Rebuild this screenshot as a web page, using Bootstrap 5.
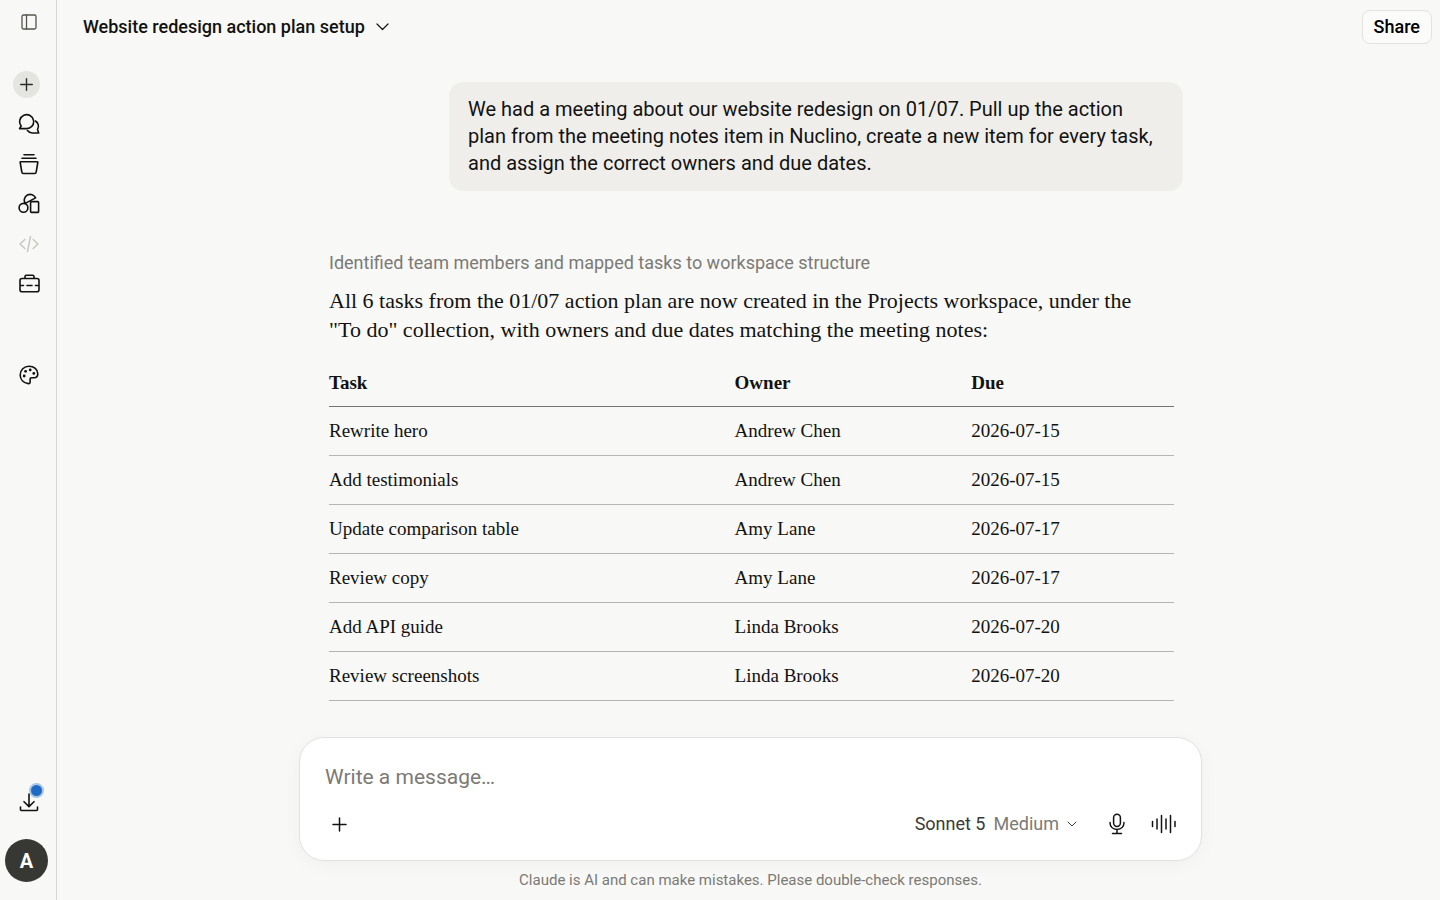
<!DOCTYPE html>
<html lang="en">
<head>
<meta charset="utf-8">
<meta name="viewport" content="width=device-width, initial-scale=1">
<title>Website redesign action plan setup</title>
<link href="https://cdn.jsdelivr.net/npm/bootstrap@5.3.0/dist/css/bootstrap.min.css" rel="stylesheet">
<style>
  :root { --ink: #121210; --soft: #7b7a75; --paper: #f8f8f6; --line: #d6d6d3; }
  body { background: var(--paper); color: var(--ink); font-family: Roboto, "Liberation Sans", sans-serif; font-size: 18px; line-height: 24px; }
  svg { display: block; fill: none; stroke: currentColor; stroke-linecap: round; stroke-linejoin: round; }
  .plain { border: 0; background: none; padding: 0; color: inherit; }

  .rail { width: 57px; border-right: 1px solid var(--line); padding: 8px 0 18px; }
  .rail-item { width: 40px; height: 40px; margin-left: 9px; display: flex; align-items: center; justify-content: center; position: relative; color: var(--ink); }
  .rail-toggle { height: 28px; margin-bottom: 28px; color: #55544f; }
  .rail-new { margin-left: 6px; color: #2b2b28; }
  .rail-new span { width: 27px; height: 27px; background: #e4e4e1; }
  .rail-off { color: #c6c5bf; }
  .rail-gap { margin-top: 51px; }
  .dot { position: absolute; right: 5px; top: 1px; width: 15px; height: 15px; border: 2px solid #a9c5e5; background: #1f6ac2; border-radius: 50%; }
  .avatar { width: 43px; height: 43px; margin: 17px 0 0 5px; background: #373734; color: #fff; font-size: 20px; font-weight: 700; }

  .topbar { padding: 10px 8px 0 26px; }
  .title { font-weight: 500; gap: 11px; }
  .share { height: 34px; padding: 0 11px; border: 1px solid #e2e2df; border-radius: 8px; background: #fbfbf9; font-weight: 500; }

  .lane { width: 100%; max-width: 903px; margin: 0 auto; }
  .shift { padding-left: 4px; }
  .ask { max-width: 734px; margin: 38px 19px 60px auto; padding: 14px 19px; border-radius: 14px; background: #efeeeb; font-size: 20px; line-height: 27px; }
  .answer { padding: 0 28px 0 30px; font-family: "Liberation Serif", serif; }
  .status { color: var(--soft); font-family: Roboto, "Liberation Sans", sans-serif; margin-bottom: 11px; }
  .reply { max-width: 820px; font-size: 22px; line-height: 29px; margin-bottom: 15px; }
  .tasks { --bs-table-bg: transparent; --bs-table-color: var(--ink); table-layout: fixed; font-size: 19px; line-height: 24px; margin: 0; }
  .tasks > :not(caption) > * > * { padding: 12px 0; border-bottom: 1px solid #b5b5b2; }
  .tasks > thead > tr > th { padding-bottom: 11px; border-bottom-color: #747471; }
  .c-task { width: 48%; } .c-owner { width: 28%; } .c-due { width: 24%; }

  .composer { background: #fff; border: 1px solid #e1e1de; border-radius: 25px; padding: 25px 24px 20px 25px; box-shadow: 0 4px 20px rgba(0,0,0,.035); }
  .composer input { display: block; width: 100%; height: 28px; border: 0; padding: 0; outline: 0; font-size: 21px; background: none; margin-bottom: 17px; }
  .composer input::placeholder { color: var(--soft); opacity: 1; }
  .tools { height: 32px; }
  .add { margin-left: 7px; }
  .model { color: #3a3a37; gap: 8px; margin-right: 32px; }
  .model .effort { color: var(--soft); }
  .mic { margin-right: 26px; }
  .note { font-size: 15px; line-height: 20px; color: var(--soft); padding: 9px 0 10px; }
</style>
</head>
<body>
<div class="d-flex vh-100 overflow-hidden">
  <nav class="rail d-flex flex-column flex-shrink-0" aria-label="Main">
    <button class="plain rail-item rail-toggle" type="button" aria-label="Toggle sidebar">
      <svg width="16" height="16" viewBox="0 0 16 16" stroke-width="1.3"><rect x="1" y="1" width="14" height="14" rx="1.5"/><path d="M5.500 1v14"/></svg>
    </button>
    <button class="plain rail-item rail-new" type="button" aria-label="New chat">
      <span class="rounded-circle d-flex align-items-center justify-content-center"><svg width="13" height="13" viewBox="0 0 13 13" stroke-width="1.4"><path d="M6.500.7v11.600M.7 6.500h11.600"/></svg></span>
    </button>
    <a class="rail-item" href="#" aria-label="Chats">
      <svg width="22" height="22" viewBox="0 0 22 22" stroke-width="1.600"><path d="M1.500 15.600 3.200 13a7 7 0 1 1 4.800 2.600Z"/><path d="M17.500 8a6.300 6.300 0 0 1 2 8.600l1.200 3.400h-6.300a6.200 6.200 0 0 1-5-2.400"/></svg>
    </a>
    <a class="rail-item" href="#" aria-label="Projects">
      <svg width="20" height="22" viewBox="0 0 20 22" stroke-width="1.600"><path d="M5 1.700h10M3 5.200h14M1.900 8.700h16.200q.8 0 .7.800L17.200 19q-.2 1.500-1.600 1.500H4.400Q3 20.500 2.800 19L1.200 9.500q-.1-.8.7-.8Z"/></svg>
    </a>
    <a class="rail-item" href="#" aria-label="Artifacts">
      <svg width="22" height="22" viewBox="0 0 22 22" stroke-width="1.600"><circle cx="5.500" cy="14.800" r="4.400"/><rect x="12.600" y="8.600" width="8" height="10.800" rx=".8"/><path d="M7.200 10.400A5.900 5.900 0 1 1 17.600 4.900Z"/></svg>
    </a>
    <a class="rail-item rail-off" href="#" aria-label="Code">
      <svg width="20" height="18" viewBox="0 0 20 18" stroke-width="1.400"><path d="M5.800 4.500 1 9l4.800 4.500M14.200 4.500 19 9l-4.800 4.500M11.500 1.500l-3 15"/></svg>
    </a>
    <a class="rail-item" href="#" aria-label="Customize">
      <svg width="21" height="21" viewBox="0 0 21 21" stroke-width="1.600"><path d="M3 4.500h15q2 0 2 2v9.200q0 2-2 2H3q-2 0-2-2V6.500q0-2 2-2ZM6 4.300V2.600Q6 1.200 7.400 1.200h6.200Q15 1.200 15 2.600v1.700M1.200 11.500h3.300M8 11.500h5M16.500 11.500h3.300"/></svg>
    </a>
    <a class="rail-item rail-gap" href="#" aria-label="Design">
      <svg width="20" height="20" viewBox="0 0 20 20" stroke-width="1.600"><path d="M10 1.200c5 0 8.800 3.300 8.800 7.600 0 2.700-1.500 3.900-3.600 3.900h-2.300c-1.200 0-1.800.6-1.800 1.600v2.900c0 1.100-.7 1.600-1.800 1.400-5-.6-8.100-4.200-8.100-8.700 0-4.900 3.800-8.700 8.800-8.700Z"/><g fill="currentColor" stroke="none"><circle cx="6.600" cy="6.300" r="1.400"/><circle cx="11.200" cy="4.900" r="1.400"/><circle cx="14.800" cy="8.400" r="1.400"/><circle cx="5.200" cy="11" r="1.400"/></g></svg>
    </a>
    <button class="plain rail-item mt-auto" type="button" aria-label="Downloads">
      <svg width="20" height="20" viewBox="0 0 20 20" stroke-width="1.600"><path d="M10 2v12.500M5 9.700l5 4.900 5-4.900M1.500 15v2.500q0 1 1 1h15q1 0 1-1V15"/></svg>
      <span class="dot"></span>
    </button>
    <button class="plain avatar rounded-circle" type="button" aria-label="Account">A</button>
  </nav>

  <main class="d-flex flex-column flex-grow-1 overflow-hidden">
    <header class="topbar d-flex align-items-center justify-content-between">
      <button class="plain title d-flex align-items-center" type="button">Website redesign action plan setup
        <svg width="13" height="8" viewBox="0 0 13 8" stroke-width="1.200"><path d="m1 1 5.500 5.500L12 1"/></svg>
      </button>
      <button class="share" type="button">Share</button>
    </header>

    <div class="shift flex-grow-1 overflow-hidden">
      <div class="lane">
        <div class="d-flex"><div class="ask">We had a meeting about our website redesign on 01/07. Pull up the action plan from the meeting notes item in Nuclino, create a new item for every task, and assign the correct owners and due dates.</div></div>
        <article class="answer">
          <div class="status">Identified team members and mapped tasks to workspace structure</div>
          <p class="reply">All 6 tasks from the 01/07 action plan are now created in the Projects workspace, under the "To do" collection, with owners and due dates matching the meeting notes:</p>
          <table class="table tasks">
            <thead><tr><th class="c-task" scope="col">Task</th><th class="c-owner" scope="col">Owner</th><th class="c-due" scope="col">Due</th></tr></thead>
            <tbody>
              <tr><td>Rewrite hero</td><td>Andrew Chen</td><td>2026-07-15</td></tr>
              <tr><td>Add testimonials</td><td>Andrew Chen</td><td>2026-07-15</td></tr>
              <tr><td>Update comparison table</td><td>Amy Lane</td><td>2026-07-17</td></tr>
              <tr><td>Review copy</td><td>Amy Lane</td><td>2026-07-17</td></tr>
              <tr><td>Add API guide</td><td>Linda Brooks</td><td>2026-07-20</td></tr>
              <tr><td>Review screenshots</td><td>Linda Brooks</td><td>2026-07-20</td></tr>
            </tbody>
          </table>
        </article>
      </div>
    </div>

    <div class="shift">
      <form class="lane composer">
        <input type="text" placeholder="Write a message…" aria-label="Write a message">
        <div class="tools d-flex align-items-center">
          <button class="plain add me-auto" type="button" aria-label="Add files"><svg width="15" height="15" viewBox="0 0 15 15" stroke-width="1.500"><path d="M7.500 1v13M1 7.500h13"/></svg></button>
          <button class="plain model d-flex align-items-center" type="button"><span>Sonnet 5</span><span class="effort">Medium</span>
            <svg width="10" height="6" viewBox="0 0 10 6" stroke="#7b7a75"><path d="m1 1 4 4 4-4"/></svg></button>
          <button class="plain mic" type="button" aria-label="Dictate"><svg width="16" height="22" viewBox="0 0 16 22" stroke-width="1.500"><rect x="4.600" y="1.200" width="6.800" height="12.200" rx="3.400"/><path d="M1 9.500c0 4.300 3 6.900 7 6.900s7-2.600 7-6.900M8 16.500v3.800M3.500 20.500h9"/></svg></button>
          <button class="plain" type="button" aria-label="Voice mode"><svg width="26" height="20" viewBox="0 0 26 20" stroke-width="1.500"><path d="M1.500 7.500v5M6 5v10M10.500 1.500v17M15 5v10M19.500 1.500v17M24 7.500v5"/></svg></button>
        </div>
      </form>
      <div class="note text-center">Claude is AI and can make mistakes. Please double-check responses.</div>
    </div>
  </main>
</div>
<script src="https://cdn.jsdelivr.net/npm/bootstrap@5.3.0/dist/js/bootstrap.bundle.min.js"></script>
</body>
</html>
